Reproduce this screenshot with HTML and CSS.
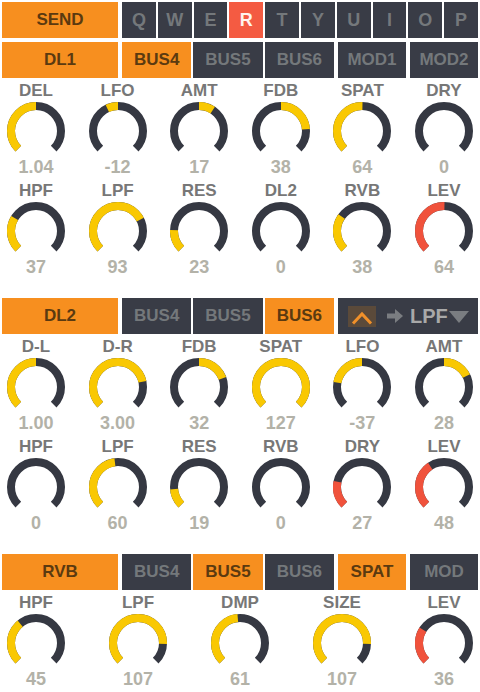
FILE: index.html
```html
<!DOCTYPE html>
<html>
<head>
<meta charset="utf-8">
<link rel="stylesheet" href="styles.css">
</head>
<body>
<div class="app">

<section class="sec">
  <div class="bar">
    <div class="btn on main">SEND</div>
    <div class="keys">
      <div class="btn">Q</div><div class="btn">W</div><div class="btn">E</div><div class="btn hot">R</div><div class="btn">T</div><div class="btn">Y</div><div class="btn">U</div><div class="btn">I</div><div class="btn">O</div><div class="btn">P</div>
    </div>
  </div>
  <div class="bar">
    <div class="btn on main">DL1</div>
    <div class="grp"><div class="btn on">BUS4</div><div class="btn">BUS5</div><div class="btn">BUS6</div></div>
    <div class="btn sm">MOD1</div>
    <div class="btn sm">MOD2</div>
  </div>
  <div class="knobs six">
    <div class="knob"><div class="lbl">DEL</div><svg class="dial" viewBox="0 0 58 50"><path class="trk" d="M11.32 46.68A25 25 0 1 1 46.68 46.68"/><path class="val" pathLength="270" stroke-dasharray="135 999" d="M11.32 46.68A25 25 0 1 1 46.68 46.68"/></svg><div class="num">1.04</div></div>
    <div class="knob"><div class="lbl">LFO</div><svg class="dial" viewBox="0 0 58 50"><path class="trk" d="M11.32 46.68A25 25 0 1 1 46.68 46.68"/><path class="val" pathLength="270" stroke-dasharray="0 109.7 25.3 999" d="M11.32 46.68A25 25 0 1 1 46.68 46.68"/></svg><div class="num">-12</div></div>
    <div class="knob"><div class="lbl">AMT</div><svg class="dial" viewBox="0 0 58 50"><path class="trk" d="M11.32 46.68A25 25 0 1 1 46.68 46.68"/><path class="val" pathLength="270" stroke-dasharray="0 135 33 999" d="M11.32 46.68A25 25 0 1 1 46.68 46.68"/></svg><div class="num">17</div></div>
    <div class="knob"><div class="lbl">FDB</div><svg class="dial" viewBox="0 0 58 50"><path class="trk" d="M11.32 46.68A25 25 0 1 1 46.68 46.68"/><path class="val" pathLength="270" stroke-dasharray="0 135 86 999" d="M11.32 46.68A25 25 0 1 1 46.68 46.68"/></svg><div class="num">38</div></div>
    <div class="knob"><div class="lbl">SPAT</div><svg class="dial" viewBox="0 0 58 50"><path class="trk" d="M11.32 46.68A25 25 0 1 1 46.68 46.68"/><path class="val" pathLength="270" stroke-dasharray="136 999" d="M11.32 46.68A25 25 0 1 1 46.68 46.68"/></svg><div class="num">64</div></div>
    <div class="knob"><div class="lbl">DRY</div><svg class="dial" viewBox="0 0 58 50"><path class="trk" d="M11.32 46.68A25 25 0 1 1 46.68 46.68"/></svg><div class="num">0</div></div>

    <div class="knob"><div class="lbl">HPF</div><svg class="dial" viewBox="0 0 58 50"><path class="trk" d="M11.32 46.68A25 25 0 1 1 46.68 46.68"/><path class="val" pathLength="270" stroke-dasharray="76 999" d="M11.32 46.68A25 25 0 1 1 46.68 46.68"/></svg><div class="num">37</div></div>
    <div class="knob"><div class="lbl">LPF</div><svg class="dial" viewBox="0 0 58 50"><path class="trk" d="M11.32 46.68A25 25 0 1 1 46.68 46.68"/><path class="val" pathLength="270" stroke-dasharray="198 999" d="M11.32 46.68A25 25 0 1 1 46.68 46.68"/></svg><div class="num">93</div></div>
    <div class="knob"><div class="lbl">RES</div><svg class="dial" viewBox="0 0 58 50"><path class="trk" d="M11.32 46.68A25 25 0 1 1 46.68 46.68"/><path class="val" pathLength="270" stroke-dasharray="47 999" d="M11.32 46.68A25 25 0 1 1 46.68 46.68"/></svg><div class="num">23</div></div>
    <div class="knob"><div class="lbl">DL2</div><svg class="dial" viewBox="0 0 58 50"><path class="trk" d="M11.32 46.68A25 25 0 1 1 46.68 46.68"/></svg><div class="num">0</div></div>
    <div class="knob"><div class="lbl">RVB</div><svg class="dial" viewBox="0 0 58 50"><path class="trk" d="M11.32 46.68A25 25 0 1 1 46.68 46.68"/><path class="val" pathLength="270" stroke-dasharray="80 999" d="M11.32 46.68A25 25 0 1 1 46.68 46.68"/></svg><div class="num">38</div></div>
    <div class="knob"><div class="lbl">LEV</div><svg class="dial" viewBox="0 0 58 50"><path class="trk" d="M11.32 46.68A25 25 0 1 1 46.68 46.68"/><path class="val red" pathLength="270" stroke-dasharray="136 999" d="M11.32 46.68A25 25 0 1 1 46.68 46.68"/></svg><div class="num">64</div></div>
  </div>
</section>

<section class="sec">
  <div class="bar">
    <div class="btn on main">DL2</div>
    <div class="grp"><div class="btn">BUS4</div><div class="btn">BUS5</div><div class="btn on">BUS6</div></div>
    <div class="panel">
      <div class="up"><svg width="28" height="21" viewBox="0 0 28 21"><path d="M5 17.5L14 8L23 17.5" fill="none" stroke="#f0902a" stroke-width="3"/></svg></div>
      <svg class="arrow" width="16" height="14" viewBox="0 0 16 14"><rect x="0" y="4.5" width="9" height="5" fill="#7a7d81"/><polygon points="8,0 16,7 8,14" fill="#7a7d81"/></svg>
      <span class="dest">LPF</span>
      <svg class="tri" width="20" height="12" viewBox="0 0 20 12"><polygon points="0,0 20,0 10,12" fill="#7a7d81"/></svg>
    </div>
  </div>
  <div class="knobs six">
    <div class="knob"><div class="lbl">D-L</div><svg class="dial" viewBox="0 0 58 50"><path class="trk" d="M11.32 46.68A25 25 0 1 1 46.68 46.68"/><path class="val" pathLength="270" stroke-dasharray="135 999" d="M11.32 46.68A25 25 0 1 1 46.68 46.68"/></svg><div class="num">1.00</div></div>
    <div class="knob"><div class="lbl">D-R</div><svg class="dial" viewBox="0 0 58 50"><path class="trk" d="M11.32 46.68A25 25 0 1 1 46.68 46.68"/><path class="val" pathLength="270" stroke-dasharray="213 999" d="M11.32 46.68A25 25 0 1 1 46.68 46.68"/></svg><div class="num">3.00</div></div>
    <div class="knob"><div class="lbl">FDB</div><svg class="dial" viewBox="0 0 58 50"><path class="trk" d="M11.32 46.68A25 25 0 1 1 46.68 46.68"/><path class="val" pathLength="270" stroke-dasharray="0 135 70 999" d="M11.32 46.68A25 25 0 1 1 46.68 46.68"/></svg><div class="num">32</div></div>
    <div class="knob"><div class="lbl">SPAT</div><svg class="dial" viewBox="0 0 58 50"><path class="trk" d="M11.32 46.68A25 25 0 1 1 46.68 46.68"/><path class="val" pathLength="270" stroke-dasharray="270 999" d="M11.32 46.68A25 25 0 1 1 46.68 46.68"/></svg><div class="num">127</div></div>
    <div class="knob"><div class="lbl">LFO</div><svg class="dial" viewBox="0 0 58 50"><path class="trk" d="M11.32 46.68A25 25 0 1 1 46.68 46.68"/><path class="val" pathLength="270" stroke-dasharray="0 55 80 999" d="M11.32 46.68A25 25 0 1 1 46.68 46.68"/></svg><div class="num">-37</div></div>
    <div class="knob"><div class="lbl">AMT</div><svg class="dial" viewBox="0 0 58 50"><path class="trk" d="M11.32 46.68A25 25 0 1 1 46.68 46.68"/><path class="val" pathLength="270" stroke-dasharray="0 135 64 999" d="M11.32 46.68A25 25 0 1 1 46.68 46.68"/></svg><div class="num">28</div></div>

    <div class="knob"><div class="lbl">HPF</div><svg class="dial" viewBox="0 0 58 50"><path class="trk" d="M11.32 46.68A25 25 0 1 1 46.68 46.68"/></svg><div class="num">0</div></div>
    <div class="knob"><div class="lbl">LPF</div><svg class="dial" viewBox="0 0 58 50"><path class="trk" d="M11.32 46.68A25 25 0 1 1 46.68 46.68"/><path class="val" pathLength="270" stroke-dasharray="128 999" d="M11.32 46.68A25 25 0 1 1 46.68 46.68"/></svg><div class="num">60</div></div>
    <div class="knob"><div class="lbl">RES</div><svg class="dial" viewBox="0 0 58 50"><path class="trk" d="M11.32 46.68A25 25 0 1 1 46.68 46.68"/><path class="val" pathLength="270" stroke-dasharray="40 999" d="M11.32 46.68A25 25 0 1 1 46.68 46.68"/></svg><div class="num">19</div></div>
    <div class="knob"><div class="lbl">RVB</div><svg class="dial" viewBox="0 0 58 50"><path class="trk" d="M11.32 46.68A25 25 0 1 1 46.68 46.68"/></svg><div class="num">0</div></div>
    <div class="knob"><div class="lbl">DRY</div><svg class="dial" viewBox="0 0 58 50"><path class="trk" d="M11.32 46.68A25 25 0 1 1 46.68 46.68"/><path class="val red" pathLength="270" stroke-dasharray="57 999" d="M11.32 46.68A25 25 0 1 1 46.68 46.68"/></svg><div class="num">27</div></div>
    <div class="knob"><div class="lbl">LEV</div><svg class="dial" viewBox="0 0 58 50"><path class="trk" d="M11.32 46.68A25 25 0 1 1 46.68 46.68"/><path class="val red" pathLength="270" stroke-dasharray="102 999" d="M11.32 46.68A25 25 0 1 1 46.68 46.68"/></svg><div class="num">48</div></div>
  </div>
</section>

<section class="sec last">
  <div class="bar">
    <div class="btn on main">RVB</div>
    <div class="grp"><div class="btn">BUS4</div><div class="btn on">BUS5</div><div class="btn">BUS6</div></div>
    <div class="btn on sm">SPAT</div>
    <div class="btn sm">MOD</div>
  </div>
  <div class="knobs five">
    <div class="knob"><div class="lbl">HPF</div><svg class="dial" viewBox="0 0 58 50"><path class="trk" d="M11.32 46.68A25 25 0 1 1 46.68 46.68"/><path class="val" pathLength="270" stroke-dasharray="96 999" d="M11.32 46.68A25 25 0 1 1 46.68 46.68"/></svg><div class="num">45</div></div>
    <div class="knob"><div class="lbl">LPF</div><svg class="dial" viewBox="0 0 58 50"><path class="trk" d="M11.32 46.68A25 25 0 1 1 46.68 46.68"/><path class="val" pathLength="270" stroke-dasharray="227 999" d="M11.32 46.68A25 25 0 1 1 46.68 46.68"/></svg><div class="num">107</div></div>
    <div class="knob"><div class="lbl">DMP</div><svg class="dial" viewBox="0 0 58 50"><path class="trk" d="M11.32 46.68A25 25 0 1 1 46.68 46.68"/><path class="val" pathLength="270" stroke-dasharray="130 999" d="M11.32 46.68A25 25 0 1 1 46.68 46.68"/></svg><div class="num">61</div></div>
    <div class="knob"><div class="lbl">SIZE</div><svg class="dial" viewBox="0 0 58 50"><path class="trk" d="M11.32 46.68A25 25 0 1 1 46.68 46.68"/><path class="val" pathLength="270" stroke-dasharray="227 999" d="M11.32 46.68A25 25 0 1 1 46.68 46.68"/></svg><div class="num">107</div></div>
    <div class="knob"><div class="lbl">LEV</div><svg class="dial" viewBox="0 0 58 50"><path class="trk" d="M11.32 46.68A25 25 0 1 1 46.68 46.68"/><path class="val red" pathLength="270" stroke-dasharray="77 999" d="M11.32 46.68A25 25 0 1 1 46.68 46.68"/></svg><div class="num">36</div></div>
  </div>
</section>

</div>
</body>
</html>
```

FILE: styles.css
```css
html, body {
  margin: 0;
  background: #ffffff;
}

body {
  font-family: "Liberation Sans", Arial, sans-serif;
  font-weight: bold;
}

.app {
  width: 476px;
  padding: 2px 2px 0;
}

.sec {
  margin-bottom: 21px;
}

.sec.last {
  margin-bottom: 0;
}

.bar {
  display: flex;
  gap: 4px;
  height: 36px;
}

.bar + .bar {
  margin-top: 4px;
}

.btn {
  display: flex;
  align-items: center;
  justify-content: center;
  background: #393c46;
  color: #74787b;
  font-size: 17px;
  line-height: 20px;
}

.btn.on {
  background: #f78f1f;
  color: #5b3a10;
}

.btn.hot {
  background: #f45b42;
  color: #fff4ee;
}

.main {
  width: 116px;
  flex: none;
}

.keys {
  flex: 1;
  display: flex;
  gap: 2px;
}

.keys .btn {
  flex: 1;
  font-size: 18px;
}

.grp {
  width: 212px;
  flex: none;
  display: flex;
  gap: 2px;
}

.grp .btn {
  flex: 1;
}

.sm {
  width: 68px;
  flex: none;
}

.panel {
  flex: 1;
  display: flex;
  align-items: center;
  background: #393c46;
  padding-left: 10px;
}

.up {
  width: 28px;
  height: 21px;
  background: #5b4a3a;
  display: flex;
}

.up svg {
  display: block;
}

.arrow {
  display: block;
  margin-left: 11px;
}

.dest {
  margin-left: 7px;
  font-size: 20px;
  line-height: 22px;
  color: #a9a9a9;
}

.tri {
  display: block;
  margin-left: 1px;
  margin-top: 2px;
}

.knobs {
  display: grid;
  justify-content: space-between;
  row-gap: 5px;
  padding: 0 5px;
  margin-top: 4px;
}

.knobs.six {
  grid-template-columns: repeat(6, 58px);
}

.knobs.five {
  grid-template-columns: repeat(5, 58px);
}

.knob {
  display: flex;
  flex-direction: column;
  align-items: center;
  width: 58px;
}

.lbl {
  font-size: 17px;
  line-height: 18px;
  color: #777777;
  margin-bottom: 2px;
  white-space: nowrap;
}

.dial {
  display: block;
  width: 58px;
  height: 50px;
}

.trk,
.val {
  fill: none;
  stroke-width: 8;
}

.trk {
  stroke: #353842;
}

.val {
  stroke: #f9c802;
}

.val.red {
  stroke: #f0523c;
}

.num {
  margin-top: 5px;
  font-size: 18px;
  line-height: 20px;
  color: #b3b2a8;
  white-space: nowrap;
}
```
